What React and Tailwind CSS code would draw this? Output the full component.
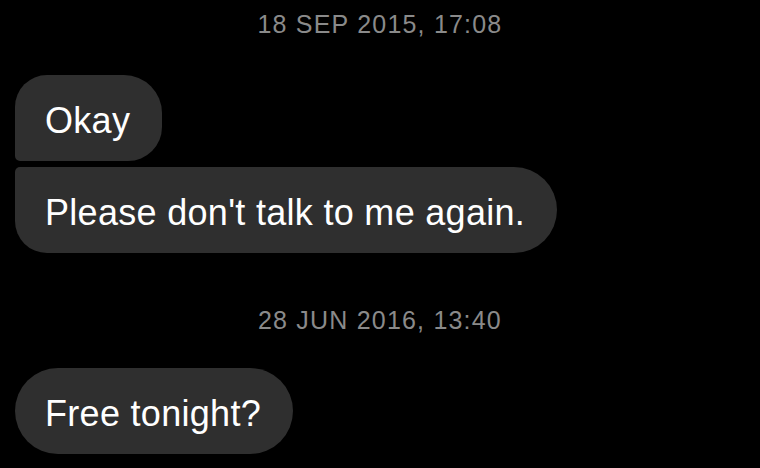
const font = { fontFamily: '"Liberation Sans", Arial, sans-serif' };

function Stamp({ children, className = "" }) {
  return (
    <div className={`text-center text-[25px] leading-[25px] tracking-[1.2px] text-[#8a8a8a] ${className}`}>
      {children}
    </div>
  );
}

function Bubble({ children, shape, className = "" }) {
  return (
    <div className={`self-start bg-[#2f2f2f] pl-[30px] pr-[32px] pt-[28px] pb-[22px] text-[36px] leading-[36px] tracking-[0.3px] text-white ${shape} ${className}`}>
      {children}
    </div>
  );
}

export default function App() {
  return (
    <div className="w-[760px] h-[468px] overflow-hidden bg-black" style={font}>
      <div className="flex flex-col px-[15px] pt-[12px]">
        <Stamp>18 SEP 2015, 17:08</Stamp>
        <Bubble shape="rounded-tl-[32px] rounded-tr-[38px] rounded-br-[34px] rounded-bl-[5px]" className="mt-[38px]">
          Okay
        </Bubble>
        <Bubble shape="rounded-tl-[5px] rounded-tr-[43px] rounded-br-[43px] rounded-bl-[32px]" className="mt-[6px]">
          Please don't talk to me again.
        </Bubble>
        <Stamp className="mt-[55px]">28 JUN 2016, 13:40</Stamp>
        <Bubble shape="rounded-[43px]" className="mt-[35px]">
          Free tonight?
        </Bubble>
      </div>
    </div>
  );
}
